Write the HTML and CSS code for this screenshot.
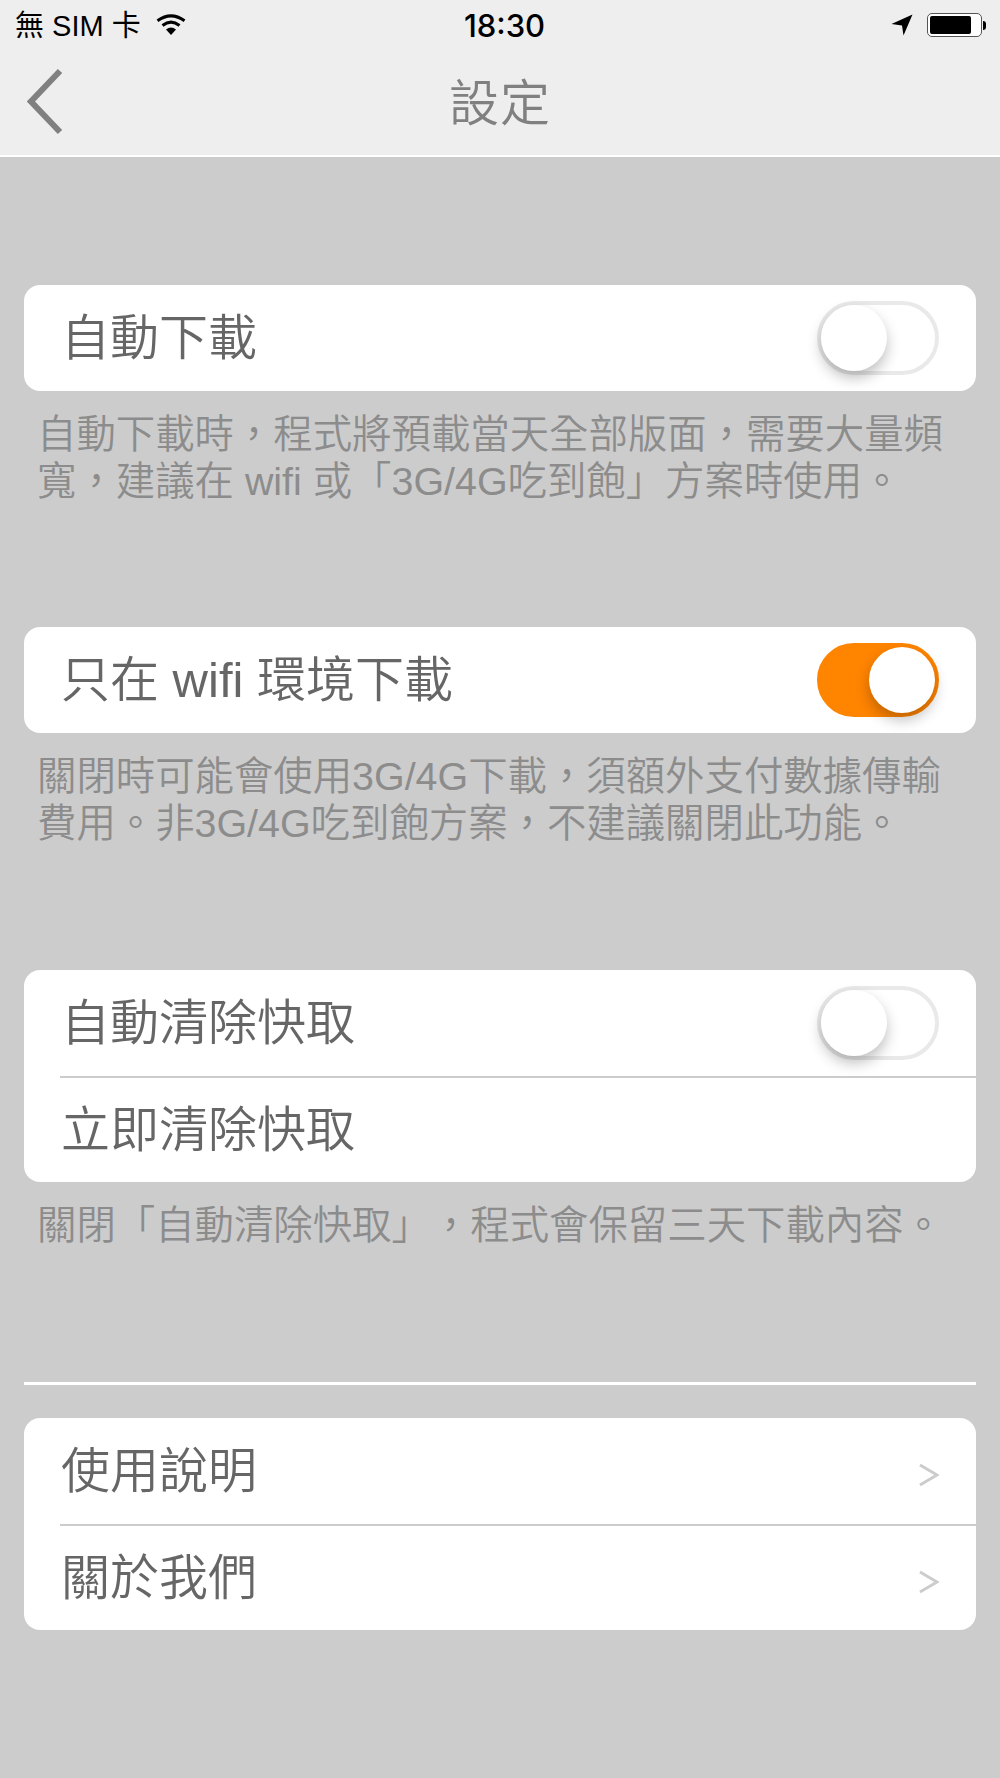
FILE: index.html
```html
<!DOCTYPE html>
<html lang="zh-Hant">
<head>
  <meta charset="UTF-8" />
  <title>設定</title>
  <link rel="stylesheet" href="styles.css">
</head>
<body>
  <header class="top">
    <div class="status">
      <div class="status-left">
        <span class="carrier">無 SIM 卡</span>
        <svg class="wifi" width="30" height="22" viewBox="0 0 30 22">
          <path d="M15 21 L10 15.5 Q15 11.5 20 15.5 Z" fill="#000"/>
          <path d="M6.5 11.5 Q15 4.8 23.5 11.5" fill="none" stroke="#000" stroke-width="3"/>
          <path d="M1.5 6.8 Q15 -3 28.5 6.8" fill="none" stroke="#000" stroke-width="3"/>
        </svg>
      </div>
      <div class="clock">18:30</div>
      <div class="status-right">
        <svg width="22" height="22" viewBox="0 0 22 22">
          <path d="M21.5 0.5 L12.5 21.5 L11 11.5 L0.5 10 Z" fill="#000"/>
        </svg>
        <div class="battery"><div class="battery-fill"></div></div>
        <div class="battery-tip"></div>
      </div>
    </div>
    <nav class="nav">
      <svg class="back" width="36" height="68" viewBox="0 0 36 68">
        <path d="M33 3 L4 33.5 L33 64" fill="none" stroke="#808080" stroke-width="6"/>
      </svg>
      <h1>設定</h1>
    </nav>
  </header>

  <main class="content">
    <section class="group">
      <div class="card">
        <div class="row">
          <span>自動下載</span>
          <div class="toggle"><div class="knob"></div></div>
        </div>
      </div>
      <p class="note">自動下載時，程式將預載當天全部版面，需要大量頻寬，建議在 wifi 或「3G/4G吃到飽」方案時使用。</p>
    </section>

    <section class="group">
      <div class="card">
        <div class="row">
          <span>只在 wifi 環境下載</span>
          <div class="toggle on"><div class="knob"></div></div>
        </div>
      </div>
      <p class="note">關閉時可能會使用3G/4G下載，須額外支付數據傳輸費用。非3G/4G吃到飽方案，不建議關閉此功能。</p>
    </section>

    <section class="group last">
      <div class="card">
        <div class="row">
          <span>自動清除快取</span>
          <div class="toggle"><div class="knob"></div></div>
        </div>
        <div class="sep"></div>
        <div class="row">
          <span>立即清除快取</span>
        </div>
      </div>
      <p class="note">關閉「自動清除快取」，程式會保留三天下載內容。</p>
    </section>

    <div class="rule"></div>

    <div class="card">
      <div class="row">
        <span>使用說明</span>
        <svg class="more" width="20" height="24" viewBox="0 0 20 24">
          <path d="M1 2 L18 12 L1 22" fill="none" stroke="#ccc" stroke-width="3"/>
        </svg>
      </div>
      <div class="sep"></div>
      <div class="row">
        <span>關於我們</span>
        <svg class="more" width="20" height="24" viewBox="0 0 20 24">
          <path d="M1 2 L18 12 L1 22" fill="none" stroke="#ccc" stroke-width="3"/>
        </svg>
      </div>
    </div>
  </main>
</body>
</html>
```

FILE: styles.css
```css
* {
  box-sizing: border-box;
}
body {
  margin: 0;
  height: 1778px;
  overflow: hidden;
  background: #cccccc;
  font-family: "Liberation Sans", "Noto Sans CJK TC", sans-serif;
  text-spacing-trim: space-all;
}
.top {
  height: 157px;
  background: #eeeeee;
  border-bottom: 2px solid #fff;
}
.status {
  height: 50px;
  padding: 0 14px 0 15px;
  display: flex;
  align-items: center;
  justify-content: space-between;
  color: #000;
  font-size: 29px;
}
.status-left {
  width: 300px;
  display: flex;
  align-items: center;
  gap: 15px;
}
.carrier {
  margin-bottom: 5px;
}
.clock {
  margin-left: 8px;
  font-family: Inter, "Liberation Sans", sans-serif;
  font-size: 31px;
  font-weight: 500;
}
.status-right {
  width: 300px;
  display: flex;
  align-items: center;
  justify-content: flex-end;
}
.battery {
  width: 55px;
  height: 24px;
  margin-left: 14px;
  padding: 2px;
  border: 1px solid #555;
  border-radius: 5px;
  background: #fff;
}
.battery-fill {
  width: 41px;
  height: 100%;
  background: #000;
  border-radius: 2px;
}
.battery-tip {
  width: 3px;
  height: 9px;
  margin-left: 1px;
  background: #000;
  border-radius: 0 3px 3px 0;
}
.nav {
  height: 105px;
  padding-bottom: 8px;
  position: relative;
  display: flex;
  align-items: center;
  justify-content: center;
}
.back {
  position: absolute;
  left: 27px;
  top: 18px;
}
h1 {
  margin: 0;
  color: #808080;
  font-size: 50px;
  font-weight: 350;
  letter-spacing: 1px;
}
.content {
  padding: 128px 24px 0;
}
.group {
  height: 342px;
}
.group + .group {
  height: 343px;
}
.group.last {
  height: 412px;
}
.card {
  background: #fff;
  border-radius: 16px;
  overflow: hidden;
}
.row {
  height: 106px;
  padding: 0 37px;
  display: flex;
  align-items: center;
  justify-content: space-between;
  color: #666666;
  font-size: 49px;
  font-weight: 350;
}
.row > span {
  line-height: 60px;
}
.sep + .row {
  height: 104px;
}
.sep {
  height: 2px;
  margin-left: 36px;
  background: #cccccc;
}
.note {
  margin: 20px 0 0;
  padding: 0 12px 0 13px;
  color: #8c8c8c;
  font-size: 39.4px;
  font-weight: 350;
  line-height: 46.5px;
}
.toggle {
  width: 122px;
  height: 74px;
  display: flex;
  border: 4px solid #e9e9e9;
  border-radius: 37px;
}
.toggle.on {
  justify-content: flex-end;
  background: #ff8400;
  border-color: #ff8400;
}
.knob {
  width: 66px;
  height: 66px;
  border-radius: 50%;
  background: #fff;
  box-shadow: 0 7px 14px rgba(0, 0, 0, 0.25);
}
.rule {
  height: 3px;
  margin-bottom: 33px;
  background: #fff;
}
.more {
  margin-top: 7px;
}
```
